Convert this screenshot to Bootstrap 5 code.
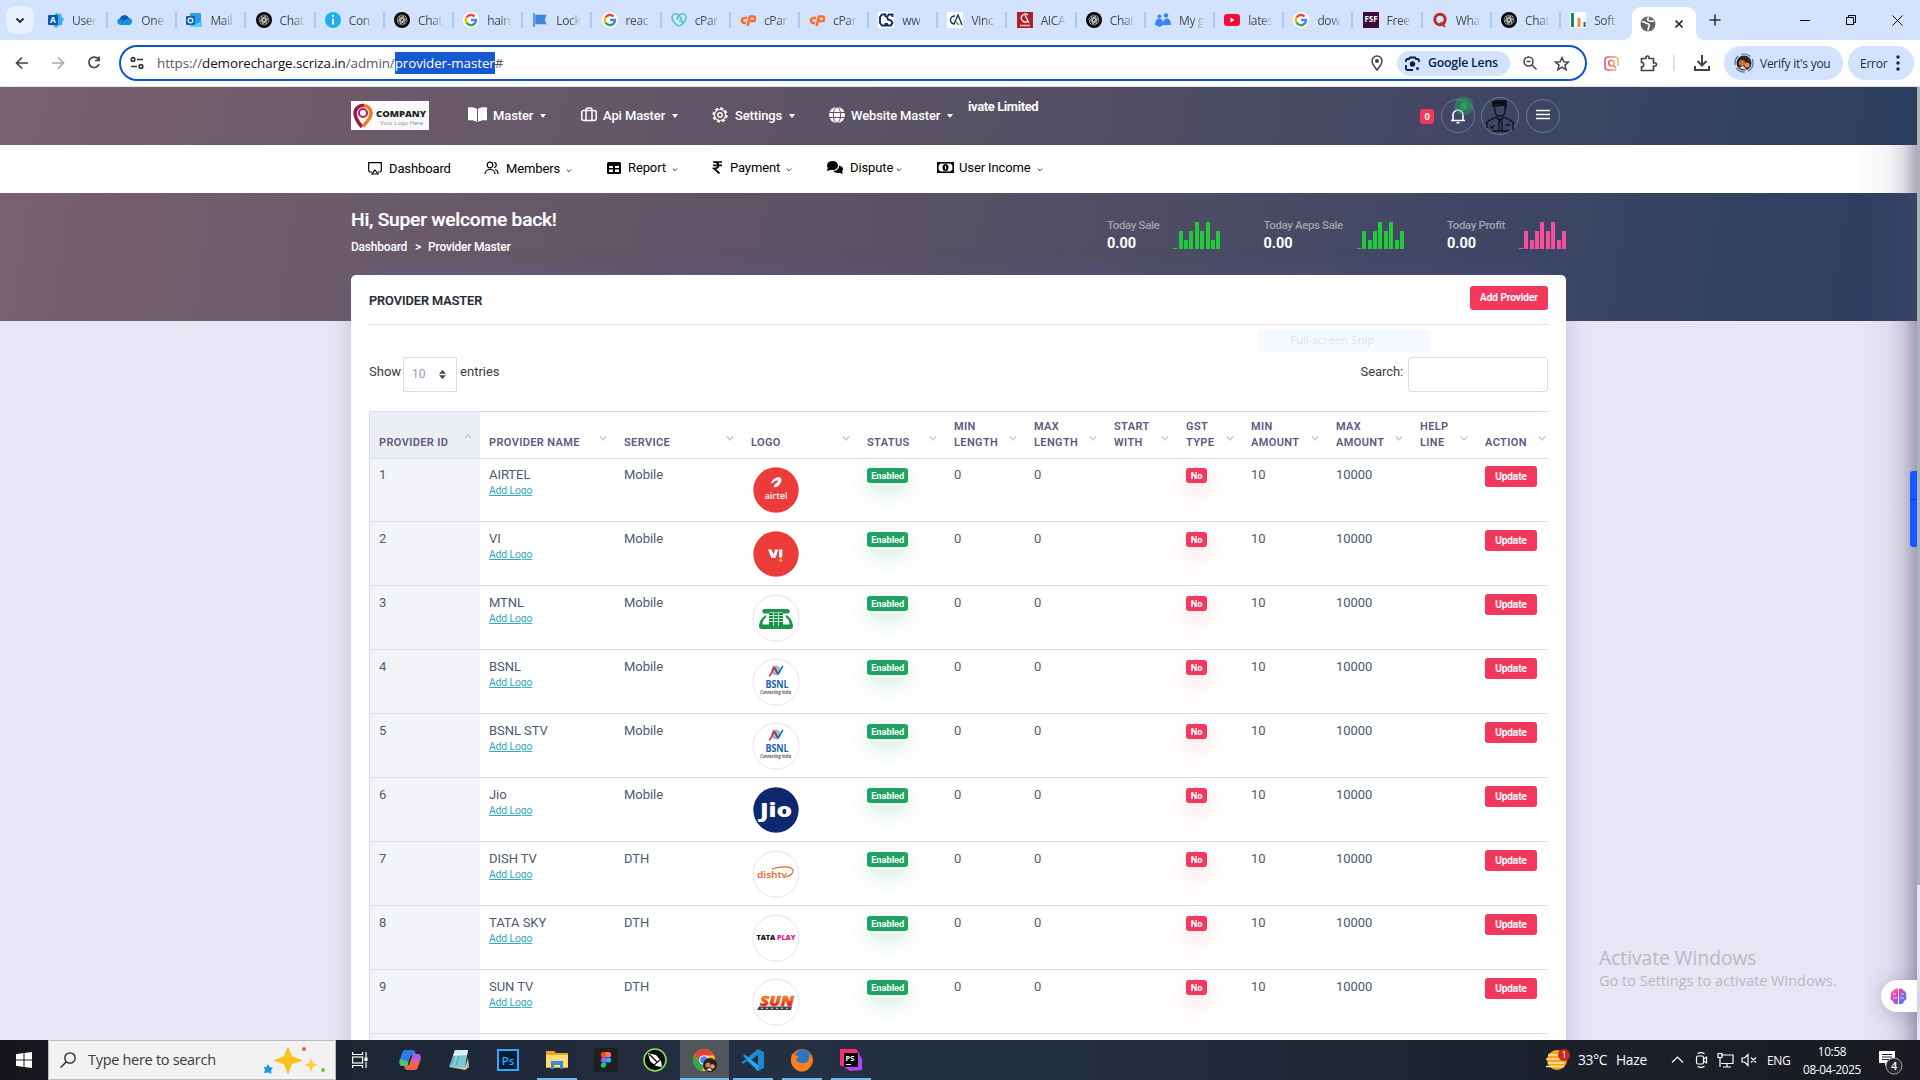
<!DOCTYPE html>
<html lang="en">
<head>
<meta charset="utf-8">
<title>Provider Master</title>
<link href="https://cdn.jsdelivr.net/npm/bootstrap@5.3.0/dist/css/bootstrap.min.css" rel="stylesheet">
<style>
body{width:1920px;height:1080px;overflow:hidden;font-family:Roboto,sans-serif;font-size:13px;line-height:1.25;color:#4d5875}
svg{display:block;flex:none;overflow:visible}
.ui{font-family:"Open Sans","Noto Sans",sans-serif}
/* tab strip */
.strip{height:40px;background:#d3e3fd;padding-left:5px}
.drop{width:28px;height:28px;border-radius:9px;background:#e9f1fe;margin:6px 5px 0 1px}
.tabx{width:69.2px;height:40px;padding-left:9px;flex:none}
.tabx .cap{width:25px;margin-left:8px;font-size:12px;letter-spacing:-.35px;color:#474b50;white-space:nowrap;-webkit-mask-image:linear-gradient(90deg,#000 55%,transparent)}
.tabx:not(.nosep)::after{content:"";width:2px;height:16px;background:#a8c7fa;margin-left:9px}
.tabon{width:64px;height:33px;margin-top:7px;margin-left:2px;background:#fff;border-radius:9px 9px 0 0;flex:none;position:relative}
.tabon::before,.tabon::after{content:"";position:absolute;bottom:0;width:8px;height:8px}
.tabon::before{left:-8px;background:radial-gradient(circle at 0 0,transparent 7.5px,#fff 8px)}
.tabon::after{right:-8px;background:radial-gradient(circle at 100% 0,transparent 7.5px,#fff 8px)}
.wbtn{width:46px;height:32px}
/* address bar */
.bar{height:47px;background:#fff;border-bottom:1px solid #dfe1e5;color:#333}
.omni{width:1468px;height:36px;border:2px solid #0b57d0;border-radius:18px;margin-left:15px}
.url{font-size:13.4px;letter-spacing:-.08px;color:#55595e;margin-left:12px;white-space:nowrap}
.url b{font-weight:400;color:#111}
.url mark{background:#1558d0;color:#fff;padding:2px 0}
.pill{background:#d3e3fd;border-radius:17px;color:#1c2b4a;font-size:12px;letter-spacing:-.26px;white-space:nowrap}
.lens{width:113px;height:25px;color:#041e49;font-weight:600;font-size:12.3px;letter-spacing:-.2px}
/* web page */
.site{height:953px;background:#e8e6f5;overflow:hidden}
.dark{background:linear-gradient(99deg,#7a616d 0,#6b5a69 20%,#534f64 55%,#414765 75%,#2d3f60 97%);background-size:1917px 234px}
.wrapx{width:1215px;margin:0 auto 0 351px}
.top1{height:58px;color:#fff;font-weight:500;letter-spacing:-.12px}
.grid1{display:grid;grid-template-columns:117px 113px 131px 117px 139px 74px}
.car{width:0;height:0;border:3px solid transparent;border-top:4px solid #fff;border-bottom:0;margin-left:7px}
.brand{width:78px;height:29px;background:#fafafa;margin-top:-2px}
.ring{border:1px solid #6d7590;border-radius:50%}
.top2{height:48px;background:#fff;color:#000;letter-spacing:-.12px;box-shadow:0 1px 3px rgba(40,40,80,.15)}
.grid2{display:grid;grid-template-columns:116px 123px 106px 114px 110px 120px;padding-left:17px}
.top3{height:128px;background-position:0 -106px}
.hello{font-size:19.2px;font-weight:500;letter-spacing:-.22px;line-height:22px;color:#fff;-webkit-text-stroke:.2px #fff}
.crumb{font-size:12px;font-weight:500;color:#fff;letter-spacing:-.22px}
.stat{font-size:11.5px;font-weight:500;letter-spacing:-.38px;color:#a09fae;line-height:14px}
.stat strong{display:block;color:#fff;font-size:14.5px;line-height:18px;margin-top:3px;letter-spacing:0}
.bars i{width:4px;background:#22c93c}
.bars{gap:1.4px;height:27px;margin-top:4px}
.bars.pk i{background:#f74f9e}
.panel{height:790px;margin-top:-46px;background:#fff;border-radius:5px 5px 0 0;box-shadow:0 0 24px rgba(100,90,190,.28);padding:0 18px;position:relative}
.phead{height:50px;border-bottom:1px solid #dfe0e6}
.ptitle{font-size:12.7px;font-weight:500;color:#242834;-webkit-text-stroke:.2px #242834}
.btnr{background:#f3385e;color:#fff;border-radius:3px;font-weight:500;font-size:10px;line-height:1;white-space:nowrap;-webkit-text-stroke:.2px #fff}
.tools{height:34px;margin-top:32px;color:#373b42}
.sel{width:54px;height:35px;border:1px solid #dcdaf7;color:#9b95ba;font-size:12px;margin:0 3px 0 2px}
.find{width:140px;height:35px;border:1px solid #dcdaf7;border-radius:3px;margin-left:5px}
.grid3{width:1185px;table-layout:fixed;border-collapse:separate;border-spacing:0;border-left:1px solid #dcdaf7;border-top:1px solid #dcdaf7}
.clipx{overflow:hidden;margin-top:20px;height:640px}
.grid3 th{height:47px;padding:0 0 7px 9px;font-size:11px;line-height:16px;vertical-align:bottom;letter-spacing:.38px;color:#5e577f;text-transform:uppercase;font-weight:600;position:relative;border-bottom:1px solid #dcdaf7;white-space:nowrap}
.grid3 th svg{position:absolute;right:8px;top:24px}
.grid3 th:first-child{background:#ebeef3}
.grid3 td:first-child{background:#f3f4f8}
.grid3 td{height:64px;padding:8px 0 0 9px;vertical-align:top;border-bottom:1px solid #dcdaf7;line-height:18px;letter-spacing:-.05px}
.grid3 tbody tr:first-child td{height:63px;padding-top:7px}
.addl{display:block;font-size:10.3px;line-height:14px;letter-spacing:-.1px;color:#2ba9bd;text-decoration:underline}
.chip{display:inline-block;height:15px;line-height:15px;border-radius:3px;padding:0 4.2px;color:#fff;font-weight:700;font-size:9.3px;vertical-align:top;margin-top:2px}
.on{background:#1ea362;box-shadow:0 8px 22px rgba(30,163,98,.24)}
.no{background:#f3385e;box-shadow:0 8px 22px rgba(243,56,94,.24)}
td .no{padding:0 4.8px}
.snip{left:907px;top:55px;width:173px;height:22px;background:#f5fafe;color:#e1e2e6;font-size:11.5px;padding:3px 0 0 32px}
.edge{right:3px;top:58px;width:60px;height:895px;background:linear-gradient(90deg,transparent,rgba(90,80,125,.06) 50%,rgba(90,80,125,.18) 75%,rgba(80,72,110,.46))}
.sbar{right:0;top:0;width:3px;height:798px;background:#a9b3b8}
.blue{right:3px;top:384px;width:7px;height:76px;background:linear-gradient(#1257ff 28px,#0c3ec0 28px,#0c3ec0 29px,#1257ff 29px);border-radius:3px 0 0 3px}
.brain{right:3px;top:893px;width:36px;height:32px;background:#fff;border-radius:16px 0 0 16px;box-shadow:0 2px 16px rgba(80,70,120,.28);padding:8px 0 0 9px}
.wm{left:1599px;top:857px;color:#b9b8c2;line-height:1.15;white-space:nowrap}
.wm div{font-size:19.2px;line-height:28px}.wm p{font-size:14.5px;margin:0;line-height:18px}
/* taskbar */
.task{height:40px;background:linear-gradient(90deg,#15161b 0,#1c2533 18%,#253044 42%,#222c3e 60%,#1b212c 80%,#1a1b21);color:#fff}
.sb{width:288px;height:40px;background:#f2f2f2;border:1px solid #bbb;color:#3a3a3a;font-size:14.5px;letter-spacing:-.3px}
.app{width:49.1px;height:40px;flex:none}
.app svg{margin-bottom:1px}
.run{box-shadow:inset 0 -2px #76b9ed}
.rung{background:linear-gradient(#76b9ed,#76b9ed) center bottom/40px 2px no-repeat}
.act{background:#50565c}
</style>
<script src="https://cdn.jsdelivr.net/npm/bootstrap@5.3.0/dist/js/bootstrap.bundle.min.js"></script>
</head>
<body class="d-flex flex-column">
<svg width="0" height="0" class="position-absolute">
<defs>
<linearGradient id="gi" x1="0" x2="1"><stop stop-color="#e8478b"/><stop offset="1" stop-color="#f7b267"/></linearGradient>
<linearGradient id="gb" x1="0" x2="1" y2="1"><stop stop-color="#ff8a3c"/><stop offset=".35" stop-color="#e040d0"/><stop offset="1" stop-color="#2b8cff"/></linearGradient>
<linearGradient id="gs" x2="0" y2="1"><stop stop-color="#f79a1c"/><stop offset=".3" stop-color="#f79a1c"/><stop offset=".75" stop-color="#e8202a"/></linearGradient>
<symbol id="g" viewBox="0 0 16 16"><circle cx="8" cy="8" r="8" fill="#fff"/><g fill="none" stroke-width="2.4"><path d="M3.6 5.500A5 5 0 0 1 11.600 4.500" stroke="#ea4335"/><path d="M3.600 5.300a5.200 5.200 0 0 0 0 5.400" stroke="#fbbc05"/><path d="M3.500 10.500a5 5 0 0 0 8 1.200" stroke="#34a853"/><path d="M8 8h5a5 5 0 0 1-1.700 3.800" stroke="#4285f4"/></g></symbol>
<symbol id="gpt" viewBox="0 0 16 16"><circle cx="8" cy="8" r="8" fill="#050505"/><g fill="none" stroke="#cfcfcf" stroke-width=".7"><rect x="5.200" y="3" width="4.600" height="6.500" rx="2.200"/><rect x="5.200" y="3" width="4.600" height="6.500" rx="2.200" transform="rotate(60 8 8)"/><rect x="5.200" y="3" width="4.600" height="6.500" rx="2.200" transform="rotate(120 8 8)"/><rect x="5.200" y="3" width="4.600" height="6.500" rx="2.200" transform="rotate(180 8 8)"/><rect x="5.200" y="3" width="4.600" height="6.500" rx="2.200" transform="rotate(240 8 8)"/><rect x="5.200" y="3" width="4.600" height="6.500" rx="2.200" transform="rotate(300 8 8)"/></g></symbol>
<symbol id="az" viewBox="0 0 16 16"><path d="M8 0l2 2 3-.5.3 3L16 7l-1.700 2.700L14 13l-3 .5L8 16l-2.500-2.400L3 13z" fill="#32b0e8"/><rect x="0" y="3" width="10" height="10" rx="1" fill="#0c59a8"/><text x="5" y="11" font-size="8.500" font-weight="700" fill="#fff" text-anchor="middle" font-family="Open Sans">A</text></symbol>
<symbol id="od" viewBox="0 0 16 16"><path d="M3.500 13a3.400 3.400 0 0 1-.5-6.700A5 5 0 0 1 12 6a3.600 3.600 0 0 1 .5 7z" fill="#1490df"/><path d="M3 6.300A5 5 0 0 1 12 6L6 9z" fill="#0a5cb0"/></symbol>
<symbol id="ol" viewBox="0 0 16 16"><rect x="4" y="1" width="11" height="14" rx="1" fill="#2f9be8"/><path d="M4 9l6 3 6-3v6H4z" fill="#50d0fb"/><rect x="0" y="4" width="9" height="9" rx="1" fill="#0a63b8"/><circle cx="4.500" cy="8.500" r="2.300" fill="none" stroke="#fff" stroke-width="1.300"/></symbol>
<symbol id="in" viewBox="0 0 16 16"><circle cx="8" cy="8" r="8" fill="#19b0f0"/><path d="M8 6.500v6M8 3v2" stroke="#fff" stroke-width="2"/></symbol>
<symbol id="fl" viewBox="0 0 16 16"><path d="M2 1v14M4 3.500h9.500L12 7.500l1.500 4H4z" fill="#3b86dc" stroke="#3b86dc" stroke-width="1.500"/></symbol>
<symbol id="gd" viewBox="0 0 16 16"><path d="M8 14C3 12 0 7 1.500 3.500 3.500 0 9 2 10.500 8M8 14c5-2 8-7 6.500-10.500C12.500 0 7 2 6 8M8 9h3v2" fill="none" stroke="#4cc3c7" stroke-width="1.500"/></symbol>
<symbol id="cp" viewBox="0 0 16 16"><path d="M7 6H4.500a2.500 2.500 0 0 0 0 5H6M7.500 14l2.500-9.500h3a2.200 2.200 0 0 1 0 4.500h-3" fill="none" stroke="#ff6c2c" stroke-width="2.500"/></symbol>
<symbol id="cs" viewBox="0 0 16 16"><rect width="16" height="16" fill="#fff"/><path d="M7.500 5V2.500H4L2 5v6l2 2.500h3.500V11M14.500 5V2.500H11L9 5l1 2.500 3 1 1.500 2-1.500 3H9V11" fill="none" stroke="#112a6d" stroke-width="1.900"/></symbol>
<symbol id="ca" viewBox="0 0 16 16"><rect width="16" height="16" fill="#fff"/><path d="M8 4a4 4 0 1 0-1 8L11 3l4 10" fill="none" stroke="#16305c" stroke-width="1.400"/><path d="M9 10l3 3" stroke="#39a845" stroke-width="1.500"/></symbol>
<symbol id="ai" viewBox="0 0 16 16"><rect width="16" height="16" fill="#b01e28"/><path d="M11 3a4 4 0 1 0 0 6L8 3l4 8" fill="none" stroke="#fff" stroke-width="1.200"/><path d="M3 13.500h10" stroke="#fff" stroke-width="1.500" stroke-dasharray="1.500 .6"/></symbol>
<symbol id="pe" viewBox="0 0 16 16"><g fill="#3b86f5"><circle cx="4.500" cy="4.500" r="2"/><circle cx="11" cy="3.500" r="2.300"/><path d="M0 13c0-8 7-8 8-3 1-5 8-5 8 3H8l-3 2z"/></g></symbol>
<symbol id="yt" viewBox="0 0 16 16"><rect y="2" width="16" height="12" rx="3" fill="#f8093c"/><path d="M6.500 5.500v5l4-2.500z" fill="#fff"/></symbol>
<symbol id="fs" viewBox="0 0 16 16"><rect width="16" height="16" fill="#3c0c3c"/><text x="8" y="9.500" font-size="8" font-weight="700" fill="#fff" text-anchor="middle" font-family="Open Sans">FSF</text></symbol>
<symbol id="qq" viewBox="0 0 16 16"><circle cx="8" cy="7.500" r="5.200" fill="none" stroke="#b92b27" stroke-width="3"/><path d="M9 10l4 5" stroke="#b92b27" stroke-width="2"/></symbol>
<symbol id="so" viewBox="0 0 16 16"><rect width="16" height="16" fill="#fff"/><path d="M2.500 1v14" stroke="#0e8f73" stroke-width="3"/><path d="M9 6v9" stroke="#f08a4b" stroke-width="3"/><path d="M14.500 10v5" stroke="#0e6f73" stroke-width="2"/></symbol>
</defs></svg>

<div class="strip ui d-flex">
  <div class="drop d-flex align-items-center justify-content-center"><svg width="10" height="10" viewBox="0 0 10 10"><path d="M1.500 3.500L5 7l3.500-3.500" fill="none" stroke="#222" stroke-width="1.800"/></svg></div>
  <div id="tabs" class="d-flex"></div>
  <div class="tabon d-flex align-items-center"><svg width="16" height="16" viewBox="0 0 16 16" class="ms-2"><circle cx="8" cy="8" r="7.500" fill="#5f6368"/><path d="M2 6c3-1 3 1 5 1.500S10 9 9 10.500 8 13 8 14.500M9 1.500C6 3 7.500 4.500 9.500 5s3 0 4.500 0" fill="none" stroke="#fff" stroke-width="1.600"/></svg><svg width="8" height="8" viewBox="0 0 8 8" style="margin-left:19px"><path d="M.5.5l7 7m0-7l-7 7" stroke="#222" stroke-width="1.700"/></svg></div>
  <svg width="12" height="12" viewBox="0 0 12 12" style="margin:14px 0 0 13px"><path d="M6 .5v11M.5 6h11" stroke="#333" stroke-width="1.600"/></svg>
  <div class="ms-auto d-flex pt-1">
    <div class="wbtn d-flex align-items-center justify-content-center"><svg width="10" height="10"><path d="M0 5.500h10" stroke="#000"/></svg></div>
    <div class="wbtn d-flex align-items-center justify-content-center"><svg width="10" height="10"><path d="M.5 2.500h7v7h-7zM2.500 2.500v-2h7v7h-2" fill="none" stroke="#000"/></svg></div>
    <div class="wbtn d-flex align-items-center justify-content-center"><svg width="11" height="11"><path d="M.5.500l10 10m0-10l-10 10" stroke="#000"/></svg></div>
  </div>
</div>

<div class="bar ui d-flex align-items-center">
  <svg width="102" height="16" viewBox="0 0 102 16" fill="none" stroke="#444" stroke-width="1.700" style="margin-left:2px"><path d="M26 8H14.500M20 2.500L14.500 8l5.500 5.500"/><path stroke="#aaa" d="M50 8h11.500M56 2.500L61.500 8 56 13.500"/><path d="M96.500 4.500A5.200 5.200 0 1 0 97 9M97 1.500v4h-4"/></svg>
  <div class="omni d-flex align-items-center">
    <svg width="14" height="14" viewBox="0 0 14 14" fill="none" stroke="#333" stroke-width="1.700" style="margin-left:9px"><circle cx="3" cy="3.500" r="1.800"/><path d="M7 3.500h6M1 10.500h6"/><circle cx="11" cy="10.500" r="1.800"/></svg>
    <div class="url" style="margin-left:13px">https://<b>demorecharge.scriza.in</b>/admin/<mark>provider-master</mark>#</div>
    <div class="ms-auto d-flex align-items-center">
      <svg width="12" height="16" viewBox="0 0 12 16" fill="none" stroke="#444" stroke-width="1.500"><path d="M6 15C3 11 1 9 1 6a5 5 0 0 1 10 0c0 3-2 5-5 9z"/><circle cx="6" cy="6" r="1.200" fill="#444"/></svg>
      <div class="pill lens d-flex align-items-center" style="margin:0 13px 0 14px"><svg width="15" height="15" viewBox="0 0 15 15" fill="none" stroke="#041e49" stroke-width="1.800" class="ms-2 me-2"><path d="M1 6V4.500A1.500 1.500 0 0 1 2.500 3H4l1-1.500h5L11 3h1.500A1.500 1.500 0 0 1 14 4.500V6M1 9v3.500A1.500 1.500 0 0 0 2.500 14H8"/><circle cx="7.500" cy="8" r="1.800" fill="#041e49"/><circle cx="12.500" cy="12.500" r=".6"/></svg>Google Lens</div>
      <svg width="14" height="14" viewBox="0 0 14 14" fill="none" stroke="#444" stroke-width="1.500" style="margin-right:17px"><circle cx="5.500" cy="5.500" r="4.500"/><path d="M9 9l4.500 4.500M3.500 5.500h4"/></svg>
      <svg width="16" height="15" viewBox="0 0 16 15" fill="none" stroke="#444" stroke-width="1.500" style="margin-right:15px"><path d="M8 1.500l1.900 4.200 4.500.4-3.400 3 1 4.500L8 11.200l-4 2.400 1-4.500-3.400-3 4.500-.4z"/></svg>
    </div>
  </div>
  <svg width="15" height="15" viewBox="0 0 15 15" fill="none" stroke="url(#gi)" stroke-width="1.500" style="margin-left:17px"><path d="M14 10V4a3 3 0 0 0-3-3H4a3 3 0 0 0-3 3v7a3 3 0 0 0 3 3h8"/><circle cx="7.500" cy="7" r="2.800"/><path d="M9.500 9.500l3 3"/></svg>
  <svg width="17" height="17" viewBox="0 0 17 17" fill="none" stroke="#444" stroke-width="1.700" style="margin-left:21px"><path d="M1.500 3.500H6V2.500a1.500 1.500 0 0 1 3 0v1h4.500V8H15a1.500 1.500 0 0 1 0 3h-1.500v4.500h-12V12c3 0 3-4.500 0-4.500z"/></svg>
  <div style="width:2px;height:16px;background:#d3e3fd;margin:0 19px 0 16px"></div>
  <svg width="16" height="16" viewBox="0 0 16 16" fill="none" stroke="#444" stroke-width="2"><path d="M8 0v10M3.500 6L8 10.500 12.500 6M1 11v4h14v-4"/></svg>
  <div class="pill d-flex align-items-center" style="width:119px;height:34px;margin-left:14px"><svg width="20" height="20" viewBox="0 0 20 20" style="margin:0 6px 0 10px"><circle cx="10" cy="10" r="9" fill="none" stroke="#3b6fc4" stroke-width="1.200" stroke-dasharray="10 3"/><circle cx="10" cy="10" r="7.500" fill="#3a2418"/><circle cx="8" cy="10" r="3" fill="#b97a52"/><circle cx="13" cy="12" r="2.500" fill="#d9925e"/><path d="M5 15l4-2 4 4z" fill="#f0e8e0"/></svg>Verify it's you</div>
  <div class="pill d-flex align-items-center" style="width:66px;height:34px;margin-left:5px;padding-left:12px">Error<svg width="4" height="16" viewBox="0 0 4 16" fill="#222" class="ms-auto" style="margin-right:14px"><circle cx="2" cy="2" r="1.700"/><circle cx="2" cy="8" r="1.700"/><circle cx="2" cy="14" r="1.700"/></svg></div>
</div>

<div class="site position-relative">
  <header class="top1 dark"><div class="wrapx d-flex align-items-center h-100">
    <div class="grid1 align-items-center">
      <div class="brand"><svg width="78" height="29" viewBox="0 0 78 29"><path d="M11 26C5 19 4 16 4 12a8 8 0 0 1 9-7.500" fill="none" stroke="#9a1848" stroke-width="3.500"/><path d="M13 4.500a7.500 7.500 0 0 1 7 8c0 5-5 9-8 13" fill="none" stroke="#f47b20" stroke-width="3.500"/><circle cx="12" cy="12" r="4" fill="#fff" stroke="#b31f4e" stroke-width="2"/><text x="25" y="16" font-size="9.500" font-weight="800" fill="#222" textLength="50" lengthAdjust="spacingAndGlyphs" font-family="Open Sans" letter-spacing="0">COMPANY</text><text x="29" y="24" font-size="6" fill="#999" textLength="43" lengthAdjust="spacingAndGlyphs" font-weight="400" letter-spacing="0">Your Logo Here</text></svg></div>
      <div class="d-flex align-items-center"><svg width="19" height="15" viewBox="0 0 19 15" fill="#fff" style="margin-top:-3px"><path d="M9 2C7 .5 4 0 0 .5v12.800c4-.3 7 0 9 1.700zM10 2c2-1.500 5-2 9-1.500v12.800c-4-.3-7 0-9 1.700z"/></svg><span style="margin-left:6px">Master</span><i class="car"></i></div>
      <div class="d-flex align-items-center"><svg width="16" height="15" viewBox="0 0 16 15" fill="none" stroke="#fff" stroke-width="1.500" style="margin-top:-4px"><rect x=".8" y="3.500" width="14.400" height="10" rx="2"/><path d="M5 13.500V3a2 2 0 0 1 2-2h2a2 2 0 0 1 2 2v10.500"/></svg><span style="margin-left:6px">Api Master</span><i class="car"></i></div>
      <div class="d-flex align-items-center"><svg width="16" height="16" viewBox="0 0 16 16" fill="none" stroke="#fff" style="margin-top:-3px"><circle cx="8" cy="8" r="6.700" stroke-width="1.900" stroke-dasharray="3.100 2.160"/><circle cx="8" cy="8" r="5.500" stroke-width="1.200"/><circle cx="8" cy="8" r="2.200" stroke-width="1.400"/></svg><span style="margin-left:7px">Settings</span><i class="car"></i></div>
      <div class="d-flex align-items-center"><svg width="16" height="16" viewBox="0 0 16 16" style="margin-top:-3px"><circle cx="8" cy="8" r="8" fill="#fff"/><g fill="none" stroke="#5b5468" stroke-width="1"><ellipse cx="8" cy="8" rx="3.600" ry="8"/><path d="M0 5.500h16M0 10.500h16"/></g></svg><span style="margin-left:6px">Website Master</span><i class="car"></i></div>
      <div class="text-nowrap fw-bold" style="letter-spacing:-.4px;margin-bottom:17px">ivate Limited</div>
    </div>
    <div class="ms-auto d-flex align-items-center" style="margin-right:6px">
      <span class="chip no m-0" style="width:14px;text-align:center">0</span>
      <div class="ring position-relative d-flex align-items-center justify-content-center" style="width:34px;height:34px;margin:0 6px 0 7px"><svg width="16" height="16" viewBox="0 0 16 16" fill="none" stroke="#fff" stroke-width="1.600"><path d="M1 12.500h14M3 12V7a5 5 0 0 1 10 0v5M6.500 14.800h3"/></svg><svg width="20" height="20" class="position-absolute" style="left:12px;top:-4px"><circle cx="10" cy="10" r="9.500" fill="#2cb55c" opacity=".4"/><circle cx="10" cy="10" r="3.700" fill="#1ea362"/></svg></div>
      <div class="ring d-flex justify-content-center" style="width:38px;height:38px"><svg width="30" height="34" viewBox="0 0 30 34" fill="none" stroke="#0b0f18" stroke-width="1.300" style="margin-top:1px"><path d="M8 8V4l2-2h11v8M9 7c4 1 6-1 11-1v6c0 7-10 7-10 0zM2 29v-5c0-3 5-3 9-6 2 3 6 3 8 0 4 3 9 3 9 6v7M11 18l4 4 4-4M14 22v10M17 22v10M7 32h17M5 27l2 2M9 26l-2 4M21 26h4"/><path d="M8 3h12v2H8z" fill="#0b0f18"/></svg></div>
      <div class="ring d-flex align-items-center justify-content-center" style="width:34px;height:34px;margin-left:7px"><svg width="14" height="12" style="margin-top:-2px"><path d="M0 1.500h14M0 5.500h14M0 9.500h14" stroke="#fff" stroke-width="1.700"/></svg></div>
    </div>
  </div></header>
  <nav class="top2"><div class="wrapx h-100 d-flex align-items-center"><div class="grid2 align-items-center" id="nav2"></div></div></nav>
  <section class="top3 dark"><div class="wrapx d-flex pt-3">
    <div><div class="hello">Hi, Super welcome back!</div><div class="crumb d-flex" style="margin-top:9px"><span>Dashboard</span><span style="margin:0 7px 0 8px">&gt;</span><span>Provider Master</span></div></div>
    <div class="ms-auto d-flex" id="stats" style="padding-top:9px"></div>
  </div></section>
  <main class="wrapx panel">
    <div class="phead d-flex justify-content-between"><div class="ptitle" style="padding-top:18px">PROVIDER MASTER</div><div><div class="btnr d-flex align-items-center justify-content-center" style="width:78px;height:24px;margin-top:11px">Add Provider</div></div></div>
    <div class="snip ui position-absolute">Full-screen Snip</div>
    <div class="tools d-flex align-items-center">
      <span class="pb-1">Show</span><div class="sel d-flex align-items-center ps-2">10<svg width="7" height="9" viewBox="0 0 7 9" fill="#3b4863" style="margin-left:13px"><path d="M0 3.700h7L3.500 0zM0 5.300h7L3.500 9z"/></svg></div><span class="pb-1">entries</span>
      <span class="ms-auto pb-1" style="letter-spacing:-.1px">Search:</span><div class="find"></div>
    </div>
    <div class="clipx"><table class="grid3"><colgroup id="cols"></colgroup><thead><tr id="heads"></tr></thead><tbody id="rows"></tbody></table></div>
  </main>
  <div class="wm ui position-absolute"><div>Activate Windows</div><p>Go to Settings to activate Windows.</p></div>
  <div class="edge position-absolute"></div>
  <div class="sbar position-absolute"></div>
  <div class="blue position-absolute"></div>
  <div class="brain position-absolute"><svg width="17" height="17" viewBox="0 0 17 17"><path d="M8 1v15c-3 1-5-1-5-3C0 12 0 9 1 8 0 5 2 3 3 3c1-2 3-3 5-2zM9 1v15c3 1 5-1 5-3 3-1 3-4 2-5 1-3-1-5-2-5-1-2-3-3-5-2z" fill="url(#gb)"/><path d="M3 6h3M3 10h4M11 6h3M10 10h4" stroke="#fff" stroke-width=".7"/></svg></div>
</div>

<footer class="task ui d-flex">
  <div style="width:48px" class="d-flex align-items-center ps-3"><svg width="16" height="16" viewBox="0 0 16 16" fill="#fff"><path d="M0 2.200L7.500 1v6.500H0zM8.500.9L16 0v7.500H8.500zM0 8.500h7.500V15L0 13.800zM8.500 8.500H16V16l-7.500-1z"/></svg></div>
  <div class="sb d-flex align-items-center"><svg width="16" height="16" viewBox="0 0 16 16" fill="none" stroke="#222" stroke-width="1.300" style="margin:0 12px 0 11px"><circle cx="10" cy="6" r="5.200"/><path d="M6.500 9.800L.5 15.500"/></svg>Type here to search
    <svg width="62" height="30" viewBox="0 0 62 30" class="ms-auto" style="margin-right:10px"><path d="M25 3l3.500 9L38 15.500l-9.500 3L25 28l-3.500-9.500L12 15.500 21.500 12z" fill="#f8c31c" stroke="#f8c31c" stroke-width="1.500" stroke-linejoin="round"/><path d="M48 13l2 5 5 2-5 2-2 5-2-5-5-2 5-2z" fill="#f9cf46"/><path d="M5 19l1.800 3 3.200 1-2 2.500.5 3.500-3-1.500L1 28l1-3.500-1.500-2.500 3 0z" fill="#2498e8"/><circle cx="41" cy="4" r="2" fill="#ee5a38"/><circle cx="60" cy="25" r="2" fill="#79c143"/></svg></div>
  <div class="app d-flex align-items-center justify-content-center"><svg width="16" height="16" viewBox="0 0 16 16" fill="none" stroke="#fff" stroke-width="1.200" style="margin-right:1px"><rect x=".6" y="5" width="10" height="6"/><path d="M.6 0v2.500h10V0M.6 16v-2.500h10V16M14 0v5M14 10v6"/><rect x="13" y="6" width="2" height="2.500" fill="#fff"/></svg></div>
  <div class="app d-flex align-items-center justify-content-center"><svg width="24" height="24" viewBox="0 0 24 24"><path d="M7 2h8c2 0 2 2 3 5h-5l-4 11H4C1 18 1 14 2 11l2-6c.600-2 1.500-3 3-3z" fill="#2a7de8"/><path d="M17 22H9c-2 0-2-2-3-5h5l4-11h5c3 0 3 4 2 7l-2 6c-.600 2-1.500 3-3 3z" fill="#f2644b"/><path d="M15 6h5c3 0 3 4 2 7h-8z" fill="#b45be0"/><path d="M2 11l-.5 3c0 3 1 4 3 4h4.500l1.500-4z" fill="#58c469"/></svg></div>
  <div class="app d-flex align-items-center justify-content-center"><svg width="24" height="24" viewBox="0 0 24 24"><path d="M8 2h13l-3 17H2z" fill="#7fc7d6"/><path d="M8 2l13 0-1 5-14 1z" fill="#d8eef0"/><path d="M2 19h16l3-9 1 9-4 3z" fill="#c9c0a9"/><path d="M7 8l-3 9M12 8L9 17" stroke="#4fa0af"/></svg></div>
  <div class="app d-flex align-items-center justify-content-center"><svg width="22" height="22" viewBox="0 0 22 22"><rect x="1" y="1" width="20" height="20" fill="#001d34" stroke="#31a8ff" stroke-width="2"/><text x="11" y="15.500" font-size="11.500" text-anchor="middle" fill="#31a8ff" font-weight="600">Ps</text></svg></div>
  <div class="app rung d-flex align-items-center justify-content-center"><svg width="24" height="20" viewBox="0 0 24 20"><path d="M1 1h8l2 2h12v15H1z" fill="#e9a823"/><path d="M1 5h22v12H1z" fill="#fddc74"/><path d="M6 11h12v8h-3v-4H9v4H6z" fill="#2b8de0"/></svg></div>
  <div class="app d-flex align-items-center justify-content-center"><svg width="24" height="24" viewBox="0 0 24 24"><rect width="24" height="24" rx="3" fill="#1f1f1f"/><path d="M12 4H9.500a2.600 2.600 0 0 0 0 5.300H12z" fill="#f24e1e"/><path d="M12 4h2.500a2.600 2.600 0 0 1 0 5.300H12z" fill="#ff7262"/><path d="M12 9.300H9.500a2.600 2.600 0 0 0 0 5.300H12z" fill="#a259ff"/><circle cx="14.600" cy="12" r="2.600" fill="#1abcfe"/><path d="M12 14.600H9.500A2.600 2.600 0 1 0 12 17.300z" fill="#0acf83"/></svg></div>
  <div class="app d-flex align-items-center justify-content-center"><svg width="24" height="24" viewBox="0 0 24 24"><circle cx="12" cy="12" r="11" fill="#0a0a0a" stroke="#8be04e" stroke-width="1.600"/><path d="M5 5l8 2 5 6 1 6-6-1-6-5z" fill="#fff"/><path d="M6 6l8 8" stroke="#111" stroke-width="1.500"/><path d="M11 17l6-5" stroke="#111" stroke-width="1.200"/></svg></div>
  <div class="app act run d-flex align-items-center justify-content-center"><svg width="24" height="24" viewBox="0 0 24 24"><circle cx="12" cy="12" r="11" fill="#fbc116"/><path d="M2.500 6.500A11 11 0 0 1 22 7.500H12L8 14z" fill="#e94235"/><path d="M2.500 6.500L8 15l4 2-2 6A11 11 0 0 1 2.500 6.500z" fill="#34a350"/><circle cx="12" cy="12" r="4.800" fill="#fff"/><circle cx="12" cy="12" r="3.800" fill="#4285f4"/><circle cx="18" cy="17" r="7" fill="#2d1d16"/><circle cx="16" cy="17" r="2.600" fill="#c78455"/><circle cx="20.500" cy="18.500" r="2.200" fill="#e39d67"/><path d="M14 22l4-2 2 3z" fill="#fff"/></svg></div>
  <div class="app rung d-flex align-items-center justify-content-center"><svg width="24" height="24" viewBox="0 0 24 24"><path d="M17 1l6 3v16l-6 3L6 13l-4 3-1.500-1.500L17 1v6L10 12l7 5z" fill="#1f8ad2"/><path d="M2 8l4 3 11 12V17L3.500 6.500z" fill="#2ba3ee"/></svg></div>
  <div class="app rung d-flex align-items-center justify-content-center"><svg width="24" height="24" viewBox="0 0 24 24"><circle cx="12" cy="12" r="11" fill="#f26a1b"/><circle cx="13" cy="9.500" r="8" fill="#2a76c4"/><path d="M2 5c1 2 3 2 6 3 1 1 1 2-2 3 1 4 8 6 12 2 1-2 2-5 0-8 6 5 5 13-1 17S3 22 1 14z" fill="#f5831f"/></svg></div>
  <div class="app rung d-flex align-items-center justify-content-center"><svg width="24" height="24" viewBox="0 0 24 24"><path d="M1 1l17 1 5 9v11l-12 1-9-6z" fill="#b842f5"/><path d="M1 1h16l3 5-14 12H1z" fill="#f72e78"/><rect x="5" y="5" width="14" height="14" fill="#000"/><text x="6.500" y="13" font-size="7.500" font-weight="700" fill="#fff">PS</text><path d="M7 16.500h5" stroke="#fff"/></svg></div>
  <div class="ms-auto d-flex align-items-center" style="font-size:13.800px;letter-spacing:-.3px">
    <svg width="24" height="22" viewBox="0 0 24 22"><circle cx="11" cy="11" r="10" fill="#f9a51a"/><path d="M2 6h13M0 10h19M2 14h16M0 17.500h18" stroke="#fbe7b6" stroke-width="1.700"/><circle cx="18" cy="6" r="6" fill="#c42b1c"/><text x="18" y="9" font-size="8.500" fill="#fff" text-anchor="middle">1</text></svg>
    <span style="margin-left:8px;width:38px">33°C</span><span style="width:54px">Haze</span>
    <svg width="90" height="16" viewBox="0 0 90 16" fill="none" stroke="#fff" stroke-width="1.200"><path d="M2 10.500L7.500 5l5.500 5.500"/><rect x="26.500" y="4" width="7" height="8" rx="1.500"/><path d="M33.500 7l3-2v6l-3-2M27.500 1.500q3.500-1.800 7 0M27.500 14.500q3.500 1.800 7 0"/><path d="M51 3h12v8.500H51M57 11.500V15M53 15h8M48 1.500h4v4h-4zM50 5.500V15"/><path d="M72 6h2.500L78 2.500v11L74.500 10H72zM81 5.500l5 5m0-5l-5 5"/></svg>
    <span style="margin-left:7px;width:36px;font-size:12px">ENG</span>
    <div class="text-center" style="font-size:11.700px;line-height:18px;width:58px">10:58<br>08-04-2025</div>
    <div class="position-relative" style="margin:0 24px 3px 18px"><svg width="17" height="16" viewBox="0 0 17 16"><path d="M0 0h16v12H9l-3 3v-3H0z" fill="#fff"/><path d="M3 3.500h10M3 6h10M3 8.500h7" stroke="#222"/></svg><svg width="18" height="18" class="position-absolute" style="left:6px;top:6px"><circle cx="9" cy="9" r="8" fill="#26282d" stroke="#a0a0a0"/><text x="9" y="13" font-size="11" font-weight="600" fill="#fff" text-anchor="middle">4</text></svg></div>
  </div>
</footer>
<script>
const put=(id,h)=>document.getElementById(id).innerHTML=h;
const tabs=[['az','User'],['od','One'],['ol','Mail'],['gpt','Chat'],['in','Con'],['gpt','Chat'],['g','hairr'],['fl','Lock'],['g','reac'],['gd','cPar'],['cp','cPar'],['cp','cPar'],['cs','ww'],['ca','Vinc'],['ai','AICA'],['gpt','Chat'],['pe','My g'],['yt','lates'],['g','dow'],['fs','Free'],['qq','Wha'],['gpt','Chat'],['so','Soft']];
put('tabs',tabs.map((t,i)=>`<div class="tabx d-flex align-items-center ${i==tabs.length-1?'nosep':''}"><svg width="16" height="16"><use href="#${t[0]}"/></svg><span class="cap">${t[1]}</span></div>`).join(''));
const dn='<svg width="6" height="4" viewBox="0 0 6 4" fill="none" stroke="#333" style="margin-left:GPpx;margin-top:2px"><path d="M.8.5L3 2.700 5.200.5"/></svg>';
const nav=[
['Dashboard','<svg width="14" height="13" viewBox="0 0 14 13" fill="none" stroke="#000" stroke-width="1.200" style="margin-top:-3px"><path d="M4 10H2.500A1.800 1.800 0 0 1 .7 8.200V.7h12.600v7.500a1.800 1.800 0 0 1-1.800 1.800H10M7 8l3 4H4z"/></svg>',7,0,2],
['Members','<svg width="15" height="14" viewBox="0 0 15 14" fill="none" stroke="#000" stroke-width="1.200" style="margin-top:-3px"><circle cx="6" cy="4" r="2.800"/><path d="M1 13c0-6 10-6 10 0M10 1.500c3 0 3 5 0 5M11 8.500c2 .5 3 2 3 4.500"/></svg>',7,6,2],
['Report','<svg width="14" height="12" viewBox="0 0 14 12" style="margin-top:-2px"><rect width="14" height="12" rx="1.500" fill="#000"/><path d="M2 4h4v2H2zM8 4h4v2H8zM2 7.500h4v2.500H2zM8 7.500h4v2.500H8z" fill="#fff"/></svg>',7,6,0],
['Payment','<svg width="9" height="13" viewBox="0 0 9 13" fill="none" stroke="#000" stroke-width="1.700" style="margin-top:-2px"><path d="M0 1h9M0 4.300h9M1 1c6 0 6 6.500 0 6.500L6.500 12.500"/></svg>',8,6,0],
['Dispute','<svg width="16" height="13" viewBox="0 0 16 13" style="margin-top:-2px"><ellipse cx="5.500" cy="4.500" rx="5.500" ry="4.500"/><path d="M1 6L0 10l5-1.500zM12 4.500c5 1 4.500 5 3 6l1 2.500-3.500-1.200c-3 .7-5.500-.3-6.300-2 3.500 0 6-2 5.800-5.300z"/></svg>',7,3,0],
['User Income','<svg width="17" height="11" viewBox="0 0 17 11" style="margin-top:-2px"><rect x=".8" y=".8" width="15.400" height="9.400" fill="none" stroke="#000" stroke-width="1.600"/><ellipse cx="8.500" cy="5.500" rx="3" ry="3.500"/><path d="M8.500 3.700v3.600" stroke="#fff"/><path d="M1 3l2-2M16 3l-2-2M1 8l2 2M16 8l-2 2" stroke="#000" stroke-width="1.500"/></svg>',5,6,0]];
put('nav2',nav.map(n=>`<div class="d-flex align-items-center" style="padding-top:${n[4]}px;margin-top:-1px">${n[1]}<span style="margin-left:${n[2]}px;white-space:nowrap">${n[0]}</span>${n[3]?dn.replace('GP',n[3]):''}</div>`).join(''));
const bh=[1,18,9,18,27,18,27,9,18];
put('stats',[['Today Sale',14,''],['Today Aeps Sale',14,''],['Today Profit',14,'pk']].map((s,i)=>`<div class="stat text-nowrap" style="margin-left:${i?43:0}px">${s[0]}<strong>0.00</strong></div><div class="bars ${s[2]} d-flex align-items-end" style="margin-left:${s[1]}px">${bh.map(h=>`<i style="height:${h}px"></i>`).join('')}</div>`).join(''));
const cw=[110,135,127,116,87,80,80,72,65,85,84,65,78];
put('cols',cw.map(w=>`<col style="width:${w}px">`).join(''));
put('heads',['Provider ID','Provider Name','Service','Logo','Status','Min<br>Length','Max<br>Length','Start<br>With','GST<br>Type','Min<br>Amount','Max<br>Amount','Help<br>Line','Action'].map((h,i)=>`<th>${h}<svg width="8" height="5" viewBox="0 0 8 5" fill="none" stroke="#c9c7da" stroke-width="1.400">${i?'<path d="M1 .5L4 4 7 .5"/>':'<path d="M1 2L4-1.500 7 2"/>'}</svg></th>`).join(''));
const F='font-family="Open Sans" text-anchor="middle"';
const W='<circle cx="24" cy="24" r="23" fill="#fff" stroke="#ececec" stroke-width="1.300"/>';
const bsnl=W+`<circle cx="24" cy="12.500" r="4.800" fill="#b5b5b5"/><path d="M17 18c2-1 3-4 5-9l3 6" fill="none" stroke="#d8262c" stroke-width="1.500"/><path d="M23 10l3 6c2-2 3-6 5-8" fill="none" stroke="#1764b0" stroke-width="1.500"/><text x="25" y="30" font-size="10.500" font-weight="700" fill="#1764b0" textLength="23" lengthAdjust="spacingAndGlyphs" ${F}>BSNL</text><text x="23.500" y="35.500" font-size="4.600" font-style="italic" font-weight="600" fill="#444" textLength="31" lengthAdjust="spacingAndGlyphs" ${F}>Connecting India</text>`;
const L={
airtel:`<circle cx="24" cy="24" r="22.700" fill="#ec3b3a"/><path d="M19 17.500c1-6 11-9 10.500-3-.3 3.500-4 6.500-6.500 7-2.500-1 0-3 .5-4 2-.5 3-3 1.500-3.200-2.500 0-3.500 3.200-6 3.200z" fill="#fff"/><text x="24" y="33" font-size="9" font-weight="600" fill="#fff" textLength="23" lengthAdjust="spacingAndGlyphs" ${F}>airtel</text>`,
vi:`<circle cx="24" cy="24" r="22.700" fill="#ec3b3a"/><path d="M16 19.500h3.600l2 5 1.500-5h3.300l-3 8.500h-4z" fill="#fff"/><path d="M28.700 19.500v8" stroke="#fff" stroke-width="3.200"/><circle cx="28.700" cy="30.300" r="1.600" fill="#fbc21a"/>`,
mtnl:W+`<path d="M12 15h24c2.500 1 2 4.500 0 4.500h-5V18H17v1.500h-5c-2 0-2.500-3.500 0-4.500z" fill="#1a9449"/><path d="M14 21c-4 2-6.500 6-7 11 0 2 1 3 3 3h28c2 0 3-1 3-3-.5-5-3-9-7-11v2.500c3 2 3.500 4 3.500 7h-27c0-3 .5-5 3.500-7z" fill="#1a9449"/><path d="M17 18.500h14v14H17z" fill="#1a9449"/><path d="M17 21.500h14M17 24.500h14M17 27.500h14M21.500 18v14M26.500 18v14" stroke="#fff" stroke-width=".7"/>`,
bsnl,
jio:`<circle cx="24" cy="24" r="22.700" fill="#0d286f"/><text x="24" y="30.500" font-size="19" font-weight="800" fill="#fff" textLength="32" lengthAdjust="spacingAndGlyphs" ${F}>Jio</text>`,
dish:W+`<text x="20" y="27.500" font-size="9.500" font-weight="600" fill="#f0612a" textLength="30" lengthAdjust="spacingAndGlyphs" ${F}>dishtv</text><path d="M20 19c9-3 19-3 21 1 1 3-3 6-7 7" fill="none" stroke="#f0612a" stroke-width="1.200"/>`,
tata:W+`<text x="24" y="26" font-size="6.800" font-weight="800" fill="#111" textLength="39" lengthAdjust="spacingAndGlyphs" ${F}>TATA <tspan fill="#e3148c">PLAY</tspan></text>`,
sun:W+`<text x="25" y="27.500" font-size="14" font-weight="800" font-style="italic" fill="url(#gs)" stroke="#ee4a24" stroke-width=".5" textLength="34" lengthAdjust="spacingAndGlyphs" ${F}>SUN</text><path d="M7 28.500h33l-1 3.500H5z" fill="#444"/><path d="M9 30.300h27" stroke="#ddd" stroke-dasharray="2 3"/>`};
const data=[['AIRTEL','Mobile','airtel'],['VI','Mobile','vi'],['MTNL','Mobile','mtnl'],['BSNL','Mobile','bsnl'],['BSNL STV','Mobile','bsnl'],['Jio','Mobile','jio'],['DISH TV','DTH','dish'],['TATA SKY','DTH','tata'],['SUN TV','DTH','sun'],['','','']];
put('rows',data.map((r,i)=>r[0]?`<tr><td>${i+1}</td><td>${r[0]}<a class="addl">Add Logo</a></td><td>${r[1]}</td><td><svg width="48" height="48" viewBox="0 0 48 48" style="margin-left:1px">${L[r[2]]}</svg></td><td><span class="chip on">Enabled</span></td><td>0</td><td>0</td><td></td><td><span class="chip no">No</span></td><td>10</td><td>10000</td><td></td><td><span class="btnr d-flex align-items-center justify-content-center" style="width:52px;height:21px">Update</span></td></tr>`:`<tr>${'<td></td>'.repeat(13)}</tr>`).join(''));
</script>
</body>
</html>
